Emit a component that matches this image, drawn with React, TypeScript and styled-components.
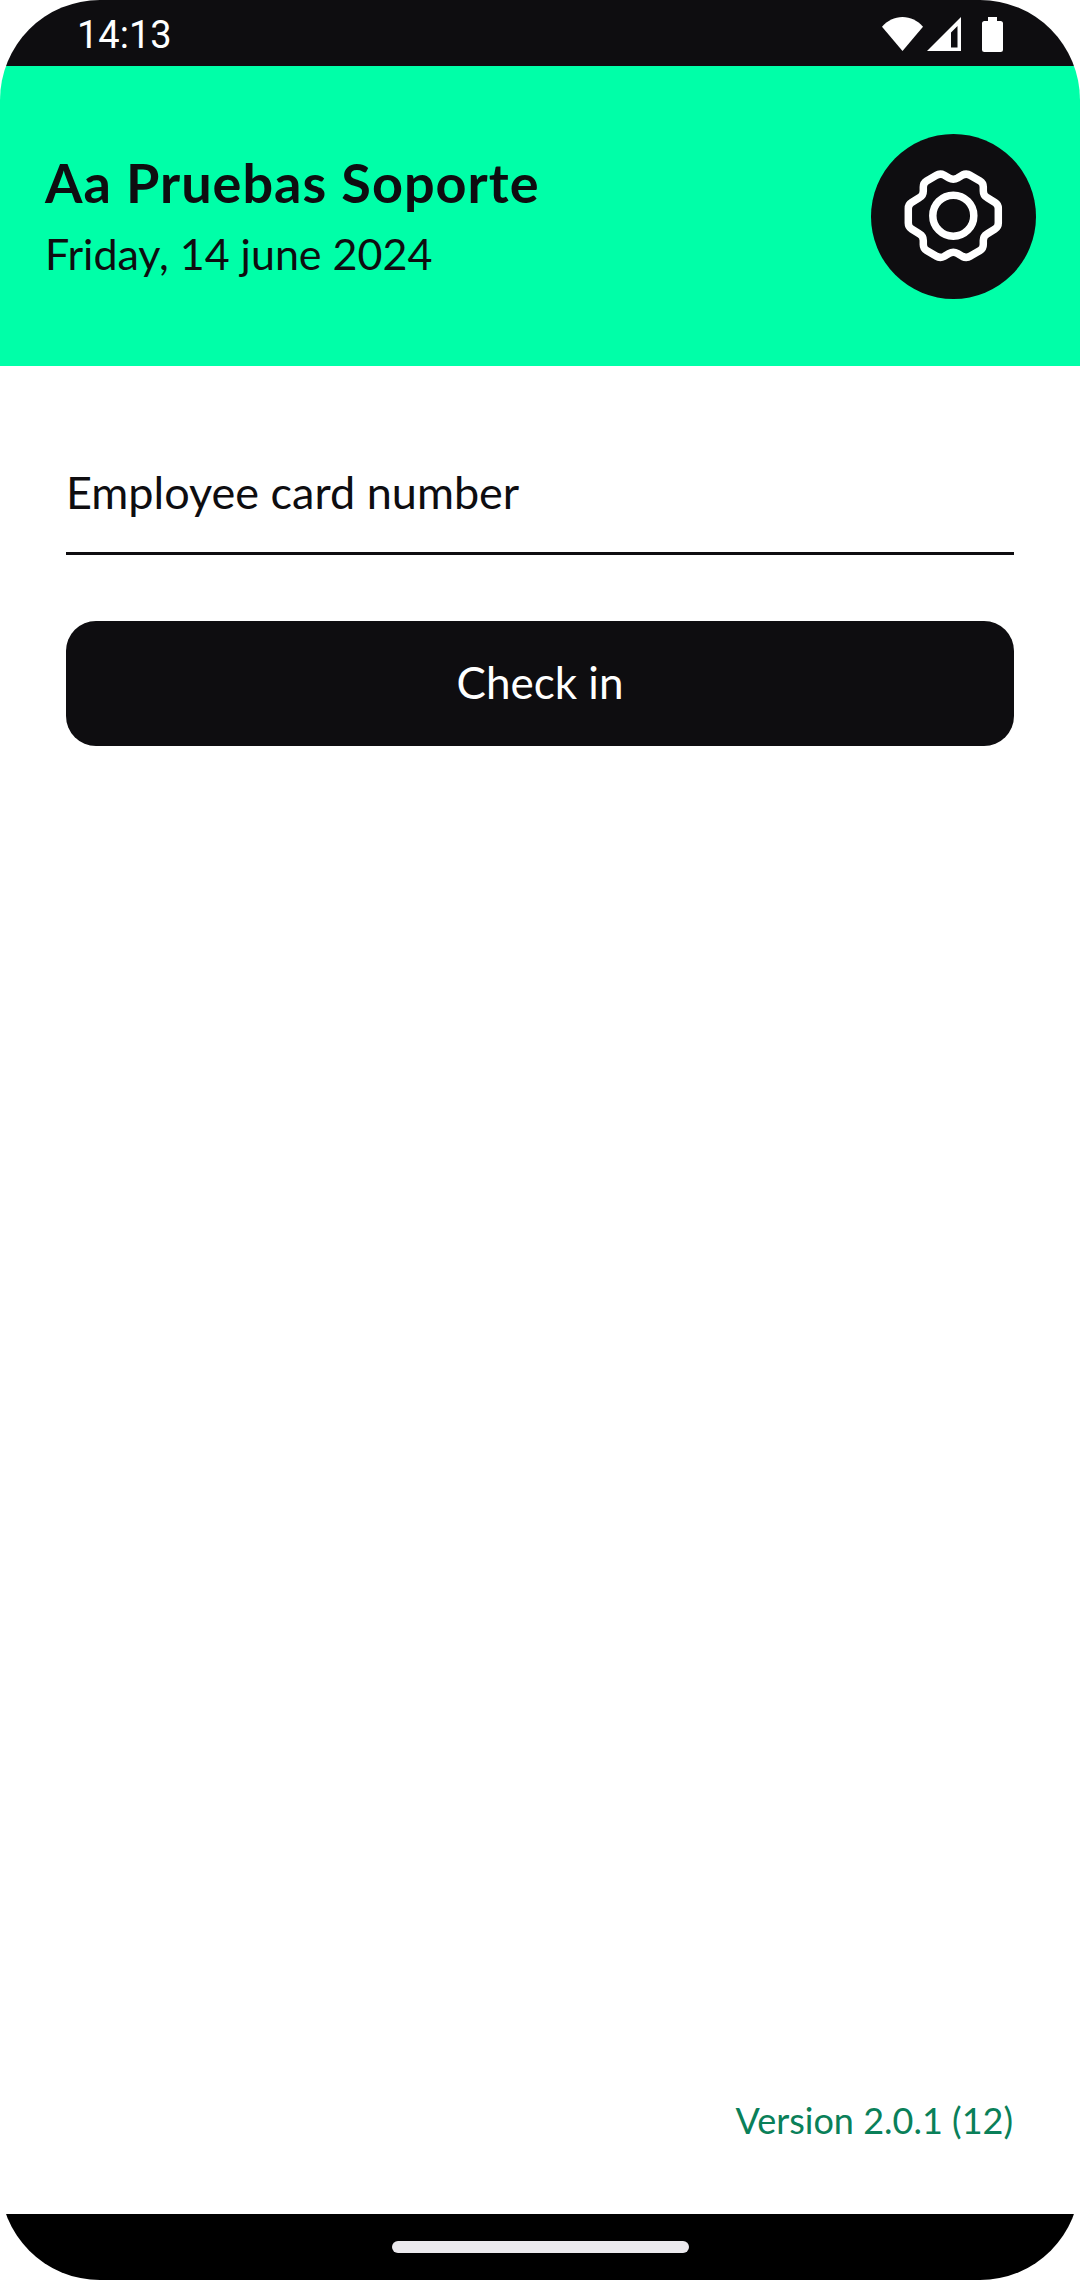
import { FC } from 'react';
import styled, { createGlobalStyle } from 'styled-components';

const GlobalStyle = createGlobalStyle`
  html, body {
    margin: 0;
    padding: 0;
    background: #fff;
  }
  * {
    box-sizing: border-box;
  }
`;

const WifiIcon: FC = () => (
  <svg width="41" height="34" viewBox="0 0 41 34">
    <path d="M0 9.700C5.500 3.500 12.500 0 20.500 0S35.500 3.500 41 9.700L20.500 34Z" fill="#fff" />
  </svg>
);

const SignalIcon: FC = () => (
  <svg width="34" height="34" viewBox="0 0 34 34">
    <path fillRule="evenodd" d="M34 0V34H0ZM30.500 9 24 15.500V30.500H30.500Z" fill="#fff" />
  </svg>
);

const BatteryIcon: FC = () => (
  <svg width="21" height="35" viewBox="0 0 21 35">
    <path
      d="M6 0H15V4H18.500A2.500 2.500 0 0 1 21 6.500V32.500A2.500 2.500 0 0 1 18.500 35H2.500A2.500 2.500 0 0 1 0 32.500V6.500A2.500 2.500 0 0 1 2.500 4H6Z"
      fill="#fff"
    />
  </svg>
);

const GearIcon: FC = () => (
  <svg width="118" height="112" viewBox="0 0 118 112" fill="none" stroke="#fff" strokeWidth="7.500">
    <path d="M41 15.500Q45 13 49 15L54 18Q58.300 20.500 62.600 18L67.500 15Q71.700 13 75.500 15.500L85 21Q88.300 23 88.300 27V31Q88.300 35.500 92 37.500L100 42.500Q103.300 44.500 103.300 48.500V63Q103.300 67 100 69L92 74Q88.300 76.200 88.300 80.500V84.500Q88.300 88.500 85 90.500L75.500 96Q71.700 98.500 67.500 96.500L62.600 93.500Q58.300 91 54 93.500L49 96.500Q45 98.500 41 96L31.600 90.500Q28.300 88.500 28.300 84.500V80.500Q28.300 76.200 24.600 74L16.600 69Q13.300 67 13.300 63V48.500Q13.300 44.500 16.600 42.500L24.600 37.500Q28.300 35.500 28.300 31V27Q28.300 23 31.600 21Z" />
    <circle cx="58.300" cy="55.700" r="20.500" />
  </svg>
);

export default function App() {
  return (
    <>
      <GlobalStyle />
      <Screen>
        <StatusBar>
          <Clock>14:13</Clock>
          <StatusIcons>
            <WifiIcon />
            <SignalIcon />
            <BatterySlot>
              <BatteryIcon />
            </BatterySlot>
          </StatusIcons>
        </StatusBar>
        <Header>
          <div>
            <Title>Aa Pruebas Soporte</Title>
            <DateLine>Friday, 14 june 2024</DateLine>
          </div>
          <SettingsButton aria-label="Settings">
            <GearIcon />
          </SettingsButton>
        </Header>
        <Main>
          <CardField>Employee card number</CardField>
          <CheckIn>Check in</CheckIn>
        </Main>
        <Version>Version 2.0.1 (12)</Version>
        <NavBar>
          <HomeIndicator />
        </NavBar>
      </Screen>
    </>
  );
}

const Screen = styled.div`
  display: flex;
  flex-direction: column;
  width: 1080px;
  height: 2280px;
  overflow: hidden;
  border-radius: 100px;
  background: #fff;
  color: #0e0d10;
  font-family: Lato, 'Noto Sans', sans-serif;
`;

const StatusBar = styled.div`
  display: flex;
  flex: none;
  align-items: center;
  justify-content: space-between;
  height: 66px;
  padding: 2px 77px 0;
  background: #0e0d10;
`;

const Clock = styled.span`
  margin-top: 2px;
  color: #fff;
  font-family: Roboto, sans-serif;
  font-size: 38px;
`;

const StatusIcons = styled.div`
  display: flex;
  align-items: center;
  gap: 4px;
`;

const BatterySlot = styled.span`
  display: flex;
  margin-left: 17px;
`;

const Header = styled.header`
  display: flex;
  flex: none;
  align-items: center;
  justify-content: space-between;
  height: 300px;
  padding: 0 44px 0 45px;
  background: #00ffa8;
`;

const Title = styled.h1`
  margin: 0;
  font-size: 54px;
  font-weight: 700;
  letter-spacing: 1px;
  line-height: 66px;
`;

const DateLine = styled.p`
  margin: 10px 0 0;
  font-size: 43px;
  font-weight: 400;
  line-height: 56px;
`;

const SettingsButton = styled.div`
  display: flex;
  align-items: center;
  justify-content: center;
  width: 165px;
  height: 165px;
  border-radius: 50%;
  background: #0e0d10;
`;

const Main = styled.main`
  display: flex;
  flex: 1;
  flex-direction: column;
  padding: 90px 66px 0;
`;

const CardField = styled.div`
  height: 99px;
  padding-top: 9px;
  border-bottom: 3px solid #0e0d10;
  font-size: 45px;
  line-height: 54px;
`;

const CheckIn = styled.div`
  display: flex;
  align-items: center;
  justify-content: center;
  height: 125px;
  margin-top: 66px;
  padding-bottom: 3px;
  border-radius: 30px;
  background: #0e0d10;
  color: #fff;
  font-size: 44px;
`;

const Version = styled.div`
  flex: none;
  padding: 0 67px 70px 0;
  color: #0a8059;
  font-size: 36px;
  line-height: 48px;
  text-align: right;
`;

const NavBar = styled.nav`
  display: flex;
  flex: none;
  justify-content: center;
  height: 66px;
  padding-top: 27px;
  background: #000;
`;

const HomeIndicator = styled.div`
  width: 297px;
  height: 12px;
  border-radius: 6px;
  background: #ebe9ed;
`;
